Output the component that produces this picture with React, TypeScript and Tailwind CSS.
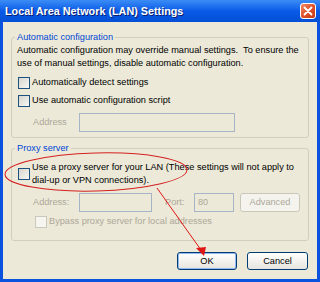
import React from "react"

const font = { fontFamily: '"Liberation Sans", Arial, sans-serif' }

function Check({ disabled = false }: { disabled?: boolean }) {
  return (
    <span
      className={`block w-[12px] h-[12px] shrink-0 border ${
        disabled
          ? "border-[#cac8bb] bg-[#f6f5f0]"
          : "border-[#1c5180] bg-gradient-to-br from-[#d6d5cc] to-[#f8f8f5]"
      }`}
    />
  )
}

function Field({ w }: { w: string }) {
  return <span className={`block h-[19px] ${w} border border-[#a6b5c5] bg-[#ece9d8]`} />
}

export default function App() {
  return (
    <div
      className="relative w-[320px] h-[282px] overflow-hidden flex flex-col bg-[#0a53de] text-[9.2px] leading-[13px] text-black"
      style={font}
    >
      {/* title bar */}
      <div className="h-[22px] shrink-0 flex items-center justify-between pl-[5px] pr-[4px] bg-gradient-to-b from-[#3b8cf5] via-[#0a5ae8] to-[#0450d6]">
        <span className="text-white font-bold text-[10.8px] [text-shadow:1px_1px_0_#0a1e70]">
          Local Area Network (LAN) Settings
        </span>
        <span className="w-[16px] h-[16px] rounded-[3px] border border-white bg-gradient-to-br from-[#f08a64] via-[#e0512a] to-[#c23a16] flex items-center justify-center">
          <svg width="10" height="10" viewBox="0 0 10 10">
            <path d="M1.5 1.5 L8.5 8.5 M8.5 1.5 L1.5 8.5" stroke="white" strokeWidth="1.8" strokeLinecap="round" />
          </svg>
        </span>
      </div>

      {/* body */}
      <div className="flex-1 mx-[3px] mb-[3px] bg-[#ece9d8] flex flex-col pt-[10px] px-[8px]">
        <fieldset className="w-[298px] border border-[#d0d0bf] rounded-[3px] pl-[5px] pr-[4px] pb-[5px]">
          <legend className="-ml-[2px] px-[2px] text-[#0046d5] leading-[11px]">Automatic configuration</legend>
          <p className="mt-[1px]">
            Automatic configuration may override manual settings.&nbsp; To ensure the
            <br />
            use of manual settings, disable automatic configuration.
          </p>
          <div className="mt-[6px] flex items-center gap-[2px] pl-[1px]">
            <Check />
            <span>Automatically detect settings</span>
          </div>
          <div className="mt-[5px] flex items-center gap-[2px] pl-[1px]">
            <Check />
            <span>Use automatic configuration script</span>
          </div>
          <div className="mt-[6px] flex items-center pl-[16px]">
            <span className="w-[46px] text-[#aca899]">Address</span>
            <Field w="w-[156px]" />
          </div>
        </fieldset>

        <fieldset className="mt-[5px] w-[298px] border border-[#d0d0bf] rounded-[3px] pl-[5px] pr-[4px] pb-[12px]">
          <legend className="-ml-[2px] px-[2px] text-[#0046d5] leading-[11px]">Proxy server</legend>
          <div className="mt-[7px] flex items-center gap-[2px] pl-[1px]">
            <Check />
            <span>
              Use a proxy server for your LAN (These settings will not apply to
              <br />
              dial-up or VPN connections).
            </span>
          </div>
          <div className="mt-[6px] flex items-center pl-[16px] text-[#aca899]">
            <span className="w-[46px]">Address:</span>
            <Field w="w-[73px]" />
            <span className="ml-[13px] w-[29px]">Port:</span>
            <span className="block h-[19px] w-[40px] border border-[#a6b5c5] bg-[#ece9d8] pl-[3px] leading-[17px]">80</span>
            <span className="ml-[6px] h-[19px] w-[60px] rounded-[3px] border border-[#c9c7ba] bg-[#f4f3ee] flex items-center justify-center">
              Advanced
            </span>
          </div>
          <div className="mt-[3px] flex items-center gap-[2px] pl-[18px] text-[#aca899]">
            <Check disabled />
            <span>Bypass proxy server for local addresses</span>
          </div>
        </fieldset>

        <div className="mt-[11px] flex justify-end gap-[10px] pr-[1px]">
          <span className="w-[60px] h-[18px] rounded-[3px] border border-[#003c74] bg-gradient-to-b from-[#ffffff] to-[#e6e5de] flex items-center justify-center shadow-[inset_0_0_0_1px_#94b8f0]">
            OK
          </span>
          <span className="w-[61px] h-[18px] rounded-[3px] border border-[#003c74] bg-gradient-to-b from-[#ffffff] to-[#e6e5de] flex items-center justify-center">
            Cancel
          </span>
        </div>
      </div>

      {/* red annotation */}
      <svg className="absolute left-0 top-0 pointer-events-none" width="320" height="282" viewBox="0 0 320 282">
        <ellipse cx="96" cy="172" rx="91" ry="19" fill="none" stroke="#d42020" strokeWidth="1" transform="rotate(-1.5 96 172)" />
        <path d="M157 188 L201 250" stroke="#e01515" strokeWidth="1" />
        <path d="M196 248 L206 247 L204 256 Z" fill="#e01515" />
      </svg>
    </div>
  )
}
